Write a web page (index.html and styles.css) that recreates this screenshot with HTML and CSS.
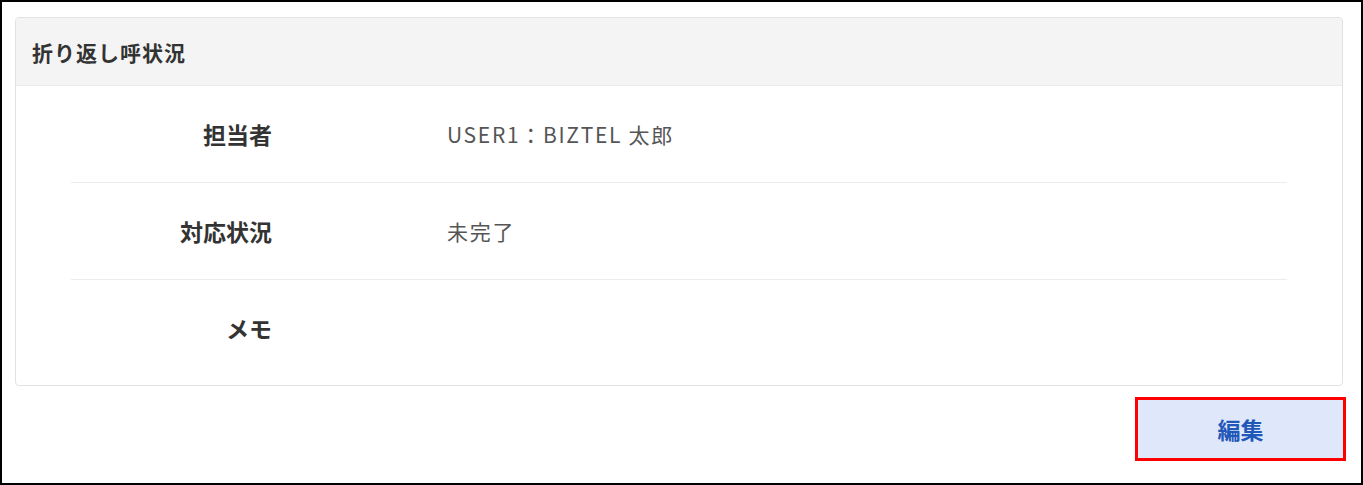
FILE: index.html
```html
<!DOCTYPE html>
<html lang="ja">
<head>
    <meta charset="UTF-8">
    <meta name="viewport" content="width=device-width, initial-scale=1.0">
    <title>折り返し呼状況</title>
    <link rel="stylesheet" href="styles.css">
</head>
<body>
    <div class="frame">
        <div class="panel">
            <div class="panel-head">折り返し呼状況</div>
            <div class="panel-body">
                <div class="row">
                    <div class="label">担当者</div>
                    <div class="value">USER1：BIZTEL 太郎</div>
                </div>
                <div class="row">
                    <div class="label">対応状況</div>
                    <div class="value">未完了</div>
                </div>
                <div class="row">
                    <div class="label">メモ</div>
                    <div class="value"></div>
                </div>
            </div>
        </div>
        <div class="actions">
            <button type="button" class="btn-edit">編集</button>
        </div>
    </div>
</body>
</html>
```

FILE: styles.css
```css
*{
    margin: 0;
    padding: 0;
    box-sizing: border-box;
}
body{
    background-color: #fff;
    font-family: "Noto Sans CJK JP", "Noto Sans", sans-serif;
    color: #333;
}
.frame{
    width: 1363px;
    height: 485px;
    border: 2px solid #000;
    padding: 15px 18px 0 13px;
}
.panel{
    border: 1px solid #e2e2e2;
    border-radius: 4px;
    overflow: hidden;
}
.panel-head{
    height: 68px;
    display: flex;
    align-items: center;
    padding-left: 16px;
    background-color: #f4f4f4;
    border-bottom: 1px solid #ececec;
    font-size: 21px;
    letter-spacing: 1px;
    font-weight: bold;
    color: #333;
}
.panel-body{
    padding: 0 55px 9px 55px;
}
.row{
    display: flex;
    align-items: center;
    height: 97px;
    border-bottom: 1px solid #ececec;
}
.row:last-child{
    border-bottom: none;
    height: 96px;
}
.label{
    width: 201px;
    text-align: right;
    font-size: 23px;
    font-weight: bold;
    color: #333;
}
.value{
    margin-left: 175px;
    font-size: 21px;
    letter-spacing: 1.7px;
    color: #555;
}
.actions{
    display: flex;
    justify-content: flex-end;
    padding-top: 11px;
    margin-right: -3px;
}
.btn-edit{
    width: 211px;
    height: 64px;
    background-color: #dfe7fb;
    border: 3px solid #f00;
    font-family: "Noto Sans CJK JP", sans-serif;
    font-size: 23px;
    font-weight: bold;
    color: #1f58b8;
    cursor: pointer;
}
```
